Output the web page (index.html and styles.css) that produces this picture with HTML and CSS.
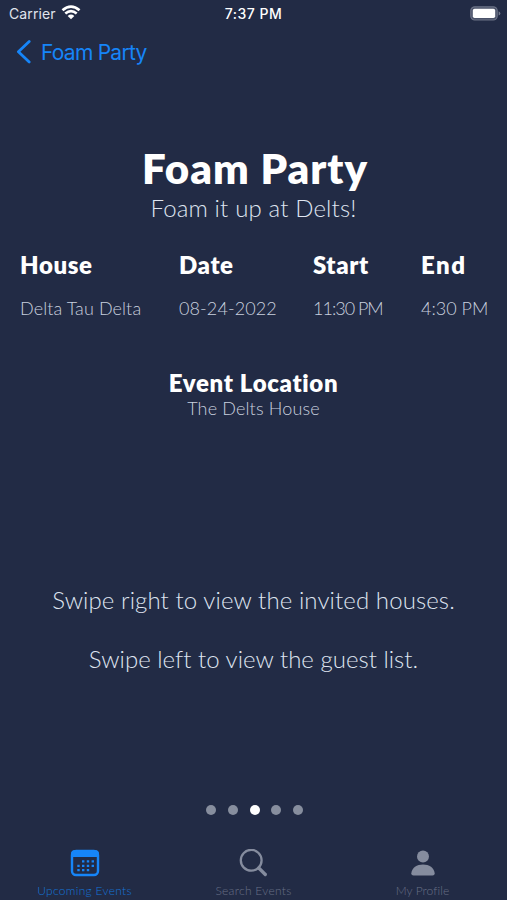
FILE: index.html
```html
<!DOCTYPE html>
<html lang="en">
<head>
<meta charset="utf-8">
<title>Foam Party</title>
<link rel="stylesheet" href="styles.css">
</head>
<body>
<div class="screen">
  <header class="status">
    <div class="carrier"><span class="carrier-name">Carrier</span>
      <svg class="wifi" width="20" height="15" viewBox="0 0 20 15" fill="none" stroke="#fff" stroke-width="2.7"><path d="M1.5 5.3Q10-2.1 18.5 5.3M4.3 8.5Q10 3.7 15.7 8.5"/><path d="M6.7 10.9Q10 8 13.3 10.9L10 14.2Z" fill="#fff" stroke="none"/></svg>
    </div>
    <span class="clock">7:37 PM</span>
    <svg class="battery" width="31" height="15" viewBox="0 0 31 15"><rect x=".8" y=".8" width="26.4" height="13.2" rx="4" fill="#4a5269" stroke="#6b7286" stroke-width="1.2"/><rect x="2.8" y="2.8" width="22.4" height="9.2" rx="1.8" fill="#fff"/><path d="M28.6 5.2Q30.4 6 30.4 7.4T28.6 9.6Z" fill="#747b8e"/></svg>
  </header>
  <nav class="nav">
    <svg width="16" height="24" viewBox="0 0 16 24" fill="none" stroke="#1685f8" stroke-width="2.8" stroke-linecap="round" stroke-linejoin="round"><path d="M13.2 1.5L2.4 11.7L13.2 21.9"/></svg>
    <span class="back">Foam Party</span>
  </nav>
  <main>
    <h1>Foam Party</h1>
    <p class="subtitle">Foam it up at Delts!</p>
    <dl class="details">
      <div class="house"><dt>House</dt><dd>Delta Tau Delta</dd></div>
      <div class="date"><dt>Date</dt><dd>08-24-2022</dd></div>
      <div class="start"><dt>Start</dt><dd>11:30 PM</dd></div>
      <div class="end"><dt>End</dt><dd>4:30 PM</dd></div>
    </dl>
    <h2>Event Location</h2>
    <p class="location">The Delts House</p>
    <p class="hint right">Swipe right to view the invited houses.</p>
    <p class="hint left">Swipe left to view the guest list.</p>
    <div class="pager"><i></i><i></i><i class="current"></i><i></i><i></i></div>
  </main>
  <footer class="tabs">
    <div class="tab active">
      <svg width="30" height="28" viewBox="0 0 30 28"><rect x="2" y="2" width="26" height="24" rx="4" fill="none" stroke="#1685f8" stroke-width="2.4"/><path d="M1 8V5Q1 1 5 1H25Q29 1 29 5V8Z" fill="#1685f8"/><path d="M12 12.4h2.4m2.4 0h2.4m2.4 0H24M7.3 16.8h2.4m2.3 0h2.4m2.4 0h2.4m2.4 0H24M7.3 21.2h2.4m2.3 0h2.4m2.4 0h2.4" stroke="#1685f8" stroke-width="2.3"/></svg>
      <span>Upcoming Events</span>
    </div>
    <div class="tab search">
      <svg width="30" height="28" viewBox="0 0 30 28" fill="none" stroke="#858c9e"><circle cx="12.2" cy="11.3" r="10.4" stroke-width="2.3"/><path d="M19.8 19L26.3 25.5" stroke-width="3.3" stroke-linecap="round"/></svg>
      <span>Search Events</span>
    </div>
    <div class="tab profile">
      <svg width="30" height="28" viewBox="0 0 30 28" fill="#858c9e"><circle cx="15" cy="7.5" r="6"/><path d="M3.3 24.5C3.7 18.7 9 15.5 15 15.5S26.3 18.7 26.7 24.5Q26.7 26.5 24.5 26.5H5.5Q3.3 26.5 3.3 24.5Z"/></svg>
      <span>My Profile</span>
    </div>
  </footer>
</div>
</body>
</html>
```
FILE: styles.css
```css
* { box-sizing: border-box; }
body { margin: 0; background: #222b45; }
h1, h2, p, dl, dd { margin: 0; }
.screen { width: 507px; height: 900px; overflow: hidden; display: flex; flex-direction: column; background: #222b45; color: #fff; font-family: Lato, sans-serif; font-variant-ligatures: none; white-space: nowrap; }
.status { height: 28px; display: grid; grid-template-columns: 1fr auto 1fr; align-items: center; padding: 0 6px 0 9px; font: 500 14px/28px Inter, sans-serif; }
.carrier { display: flex; align-items: center; gap: 5px; color: #e0e4ed; }
.carrier-name { font-weight: 400; letter-spacing: .1px; }
.wifi { margin-top: -3px; }
.clock { font-weight: 500; letter-spacing: .5px; margin-left: -3px; }
.battery { justify-self: end; margin-top: -1px; }
.nav { height: 48px; display: flex; align-items: center; gap: 9px; padding: 0 0 0 16px; color: #1685f8; font: 400 21px/48px Inter, sans-serif; letter-spacing: -.75px; }
.back { padding-top: 2px; }
main { flex: 1; text-align: center; }
h1 { margin-top: 67px; padding-left: 3px; font-size: 42px; line-height: 50px; font-weight: 800; letter-spacing: 1px; }
.subtitle { margin-top: 1px; color: #dfe4f0; font-size: 24px; line-height: 28px; font-weight: 300; letter-spacing: .15px; }
.details { display: flex; margin-top: 27px; padding-left: 20px; text-align: left; }
.house { width: 159px; }
.date { width: 134px; }
.start { width: 108px; }
dt { font-size: 24px; line-height: 32px; font-weight: 800; letter-spacing: .6px; }
.end dt { letter-spacing: 1.5px; }
dd { margin-top: 15px; color: #c9d0df; font-size: 18px; line-height: 24px; font-weight: 300; letter-spacing: .1px; }
.start dd { letter-spacing: -1px; }
.end dd { letter-spacing: 0; }
h2 { margin-top: 48px; font-size: 24px; line-height: 30px; font-weight: 800; letter-spacing: .65px; }
.location { margin-top: -1px; color: #c9d0df; font-size: 18px; line-height: 22px; font-weight: 300; letter-spacing: .15px; }
.hint { color: #dfe4f0; font-size: 24px; line-height: 30px; font-weight: 300; letter-spacing: .1px; }
.right { margin-top: 166px; }
.left { margin-top: 29px; letter-spacing: .02px; }
.pager { display: flex; justify-content: center; gap: 11.6px; margin-top: 131px; padding-left: 2px; }
.pager i { width: 10px; height: 10px; border-radius: 50%; background: #878e9e; }
.pager .current { background: #fff; }
.tabs { height: 52px; display: grid; grid-template-columns: repeat(3, 1fr); color: #687085; font-size: 12px; line-height: 15px; }
.tab { display: flex; flex-direction: column; align-items: center; font-weight: 300; padding-top: 1px; letter-spacing: .3px; }
.profile { letter-spacing: .1px; }
.tab span { margin-top: 6px; }
.active { color: #1474d8; }
```
